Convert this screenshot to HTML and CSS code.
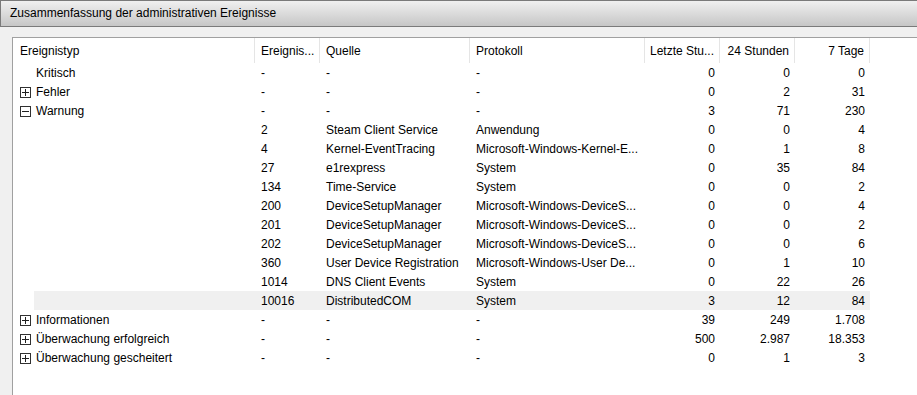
FILE: index.html
```html
<!DOCTYPE html>
<html lang="de">
<head>
<meta charset="UTF-8">
<title>Zusammenfassung der administrativen Ereignisse</title>
<link rel="stylesheet" href="styles.css">
</head>
<body>

<div class="panel">
    <div class="panel-title">Zusammenfassung der administrativen Ereignisse</div>

    <div class="panel-body">
        <div class="list">
            <div class="row head">
                <div class="cell">Ereignistyp</div>
                <div class="cell">Ereignis...</div>
                <div class="cell">Quelle</div>
                <div class="cell">Protokoll</div>
                <div class="cell num">Letzte Stu...</div>
                <div class="cell num">24 Stunden</div>
                <div class="cell num">7 Tage</div>
            </div>

            <div class="row">
                <div class="cell"><span class="exp none"></span>Kritisch</div>
                <div class="cell">-</div>
                <div class="cell">-</div>
                <div class="cell">-</div>
                <div class="cell num">0</div>
                <div class="cell num">0</div>
                <div class="cell num">0</div>
            </div>
            <div class="row">
                <div class="cell"><span class="exp plus"></span>Fehler</div>
                <div class="cell">-</div>
                <div class="cell">-</div>
                <div class="cell">-</div>
                <div class="cell num">0</div>
                <div class="cell num">2</div>
                <div class="cell num">31</div>
            </div>
            <div class="row">
                <div class="cell"><span class="exp"></span>Warnung</div>
                <div class="cell">-</div>
                <div class="cell">-</div>
                <div class="cell">-</div>
                <div class="cell num">3</div>
                <div class="cell num">71</div>
                <div class="cell num">230</div>
            </div>

            <div class="row child">
                <div class="cell"></div>
                <div class="cell">2</div>
                <div class="cell">Steam Client Service</div>
                <div class="cell">Anwendung</div>
                <div class="cell num">0</div>
                <div class="cell num">0</div>
                <div class="cell num">4</div>
            </div>
            <div class="row child">
                <div class="cell"></div>
                <div class="cell">4</div>
                <div class="cell">Kernel-EventTracing</div>
                <div class="cell">Microsoft-Windows-Kernel-E...</div>
                <div class="cell num">0</div>
                <div class="cell num">1</div>
                <div class="cell num">8</div>
            </div>
            <div class="row child">
                <div class="cell"></div>
                <div class="cell">27</div>
                <div class="cell">e1rexpress</div>
                <div class="cell">System</div>
                <div class="cell num">0</div>
                <div class="cell num">35</div>
                <div class="cell num">84</div>
            </div>
            <div class="row child">
                <div class="cell"></div>
                <div class="cell">134</div>
                <div class="cell">Time-Service</div>
                <div class="cell">System</div>
                <div class="cell num">0</div>
                <div class="cell num">0</div>
                <div class="cell num">2</div>
            </div>
            <div class="row child">
                <div class="cell"></div>
                <div class="cell">200</div>
                <div class="cell">DeviceSetupManager</div>
                <div class="cell">Microsoft-Windows-DeviceS...</div>
                <div class="cell num">0</div>
                <div class="cell num">0</div>
                <div class="cell num">4</div>
            </div>
            <div class="row child">
                <div class="cell"></div>
                <div class="cell">201</div>
                <div class="cell">DeviceSetupManager</div>
                <div class="cell">Microsoft-Windows-DeviceS...</div>
                <div class="cell num">0</div>
                <div class="cell num">0</div>
                <div class="cell num">2</div>
            </div>
            <div class="row child">
                <div class="cell"></div>
                <div class="cell">202</div>
                <div class="cell">DeviceSetupManager</div>
                <div class="cell">Microsoft-Windows-DeviceS...</div>
                <div class="cell num">0</div>
                <div class="cell num">0</div>
                <div class="cell num">6</div>
            </div>
            <div class="row child">
                <div class="cell"></div>
                <div class="cell">360</div>
                <div class="cell">User Device Registration</div>
                <div class="cell">Microsoft-Windows-User De...</div>
                <div class="cell num">0</div>
                <div class="cell num">1</div>
                <div class="cell num">10</div>
            </div>
            <div class="row child">
                <div class="cell"></div>
                <div class="cell">1014</div>
                <div class="cell">DNS Client Events</div>
                <div class="cell">System</div>
                <div class="cell num">0</div>
                <div class="cell num">22</div>
                <div class="cell num">26</div>
            </div>
            <div class="row child selected">
                <div class="cell"></div>
                <div class="cell">10016</div>
                <div class="cell">DistributedCOM</div>
                <div class="cell">System</div>
                <div class="cell num">3</div>
                <div class="cell num">12</div>
                <div class="cell num">84</div>
            </div>

            <div class="row">
                <div class="cell"><span class="exp plus"></span>Informationen</div>
                <div class="cell">-</div>
                <div class="cell">-</div>
                <div class="cell">-</div>
                <div class="cell num">39</div>
                <div class="cell num">249</div>
                <div class="cell num">1.708</div>
            </div>
            <div class="row">
                <div class="cell"><span class="exp plus"></span>Überwachung erfolgreich</div>
                <div class="cell">-</div>
                <div class="cell">-</div>
                <div class="cell">-</div>
                <div class="cell num">500</div>
                <div class="cell num">2.987</div>
                <div class="cell num">18.353</div>
            </div>
            <div class="row">
                <div class="cell"><span class="exp plus"></span>Überwachung gescheitert</div>
                <div class="cell">-</div>
                <div class="cell">-</div>
                <div class="cell">-</div>
                <div class="cell num">0</div>
                <div class="cell num">1</div>
                <div class="cell num">3</div>
            </div>
        </div>
    </div>
</div>

</body>
</html>
```

FILE: styles.css
```css
body {
    margin: 0;
    font-family: "Liberation Sans", Arial, sans-serif;
    font-size: 12px;
    color: #000;
    background-color: #f0f0f0;
    overflow: hidden;
}

.panel {
    height: 395px;
    display: flex;
    flex-direction: column;
}

.panel-title {
    height: 25px;
    line-height: 25px;
    padding-left: 9px;
    border-top: 1px solid #7a7a7a;
    border-bottom: 1px solid #7a7a7a;
    border-left: 1px solid #7a7a7a;
    background: linear-gradient(#f0f0f0, #c6c6c6);
    color: #000;
}

.panel-body {
    flex: 1;
    padding: 10px 0 0 12px;
}

.list {
    height: 100%;
    background: #fff;
    border-top: 1px solid #a0a0a0;
    border-left: 1px solid #a0a0a0;
}

.row {
    display: grid;
    grid-template-columns: 242px 65px 150px 175px 75px 75px 75px;
    height: 19px;
    line-height: 17px;
}

.row.head {
    height: 25px;
    line-height: 23px;
}

.cell {
    padding-top: 2px;
    padding-left: 7px;
    white-space: nowrap;
    overflow: hidden;
}

.cell + .cell {
    padding-left: 6px;
}

.cell.num {
    text-align: right;
    padding-left: 0;
    padding-right: 5px;
}

.head .cell {
    border-right: 1px solid #e5e5e5;
}

.head .cell:first-child {
    padding-left: 7px;
}

.selected .cell {
    background-color: #f0f0f0;
}

.selected .cell:first-child {
    background: linear-gradient(to right, transparent 21px, #f0f0f0 21px);
}

/* tree expander boxes */
.exp {
    display: inline-block;
    position: relative;
    width: 11px;
    height: 11px;
    box-sizing: border-box;
    border: 1px solid #303030;
    margin-right: 5px;
    vertical-align: -2px;
}

.exp::before {
    content: '';
    position: absolute;
    left: 1px;
    top: 4px;
    width: 7px;
    height: 1px;
    background: #202020;
}

.exp.plus::after {
    content: '';
    position: absolute;
    left: 4px;
    top: 1px;
    width: 1px;
    height: 7px;
    background: #202020;
}

.exp.none {
    border-color: transparent;
}

.exp.none::before {
    display: none;
}
```
